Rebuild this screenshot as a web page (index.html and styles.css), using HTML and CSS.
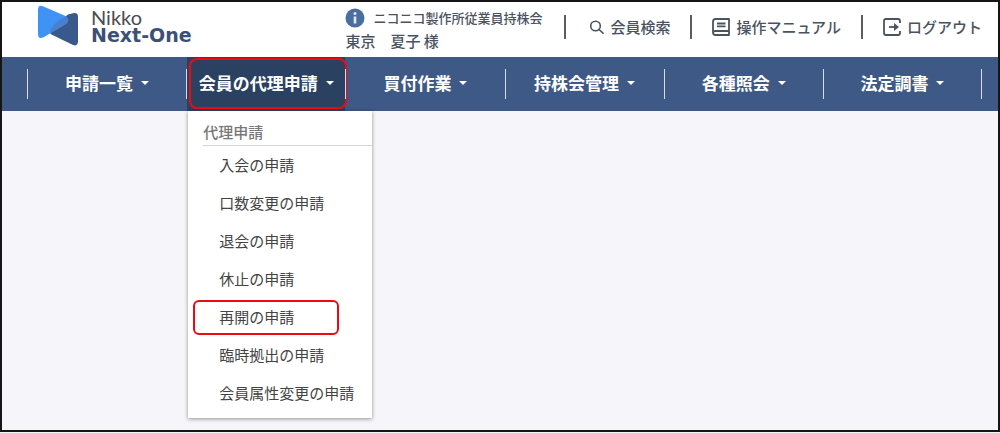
FILE: index.html
```html
<!DOCTYPE html>
<html lang="ja">
<head>
  <meta charset="UTF-8">
  <meta name="viewport" content="width=device-width, initial-scale=1.0">
  <title>Nikko Next-One</title>
  <link rel="stylesheet" href="styles.css">
</head>
<body>
<header class="header">
  <a class="logo" href="#">
    <svg class="logo-mark" viewBox="0 0 42 42" aria-hidden="true">
      <path d="M31 9.500 L37 8 Q41 7.500 41 12 V36 Q41 42 35.500 39.800 L14.500 29.500 Q11 27 14 23.500 Z" fill="#39588c"/>
      <path d="M1 5 Q1 -1 6.500 1.500 L28.500 11 Q34 14.500 29 19 L7 32 Q1 35 1 29 Z" fill="#3f93f6"/>
      <path d="M14 23.500 Q21 14 29.500 11.600 Q33.500 15 29 19 L14.500 27.500 Q12 26 14 23.500 Z" fill="#4a80cb"/>
    </svg>
    <span class="logo-text">
      <span class="logo-top">Nikko</span>
      <span class="logo-bottom">Next-One</span>
    </span>
  </a>

  <div class="user">
    <div class="user-company">
      <svg class="info-icon" viewBox="0 0 20 20" aria-hidden="true">
        <circle cx="10" cy="10" r="9.500" fill="#4a6e9e"/>
        <circle cx="10" cy="5.500" r="1.500" fill="#dfe9f7"/>
        <path d="M8.700 8.500h2.600v7H8.700z" fill="#dfe9f7"/>
      </svg>
      <span>ニコニコ製作所従業員持株会</span>
    </div>
    <div class="user-name">東京　夏子 様</div>
  </div>

  <nav class="tools">
    <a class="tool" href="#">
      <svg class="tool-icon" viewBox="0 0 18 18" fill="none" stroke="currentColor" stroke-width="1.600" stroke-linecap="round" aria-hidden="true">
        <circle cx="9.500" cy="8" r="4.800"/>
        <path d="M13 11.500l4 3.700"/>
      </svg>
      会員検索
    </a>
    <a class="tool" href="#">
      <svg class="tool-icon" viewBox="0 0 18 18" fill="none" stroke="currentColor" stroke-width="1.800" stroke-linejoin="round" aria-hidden="true">
        <path d="M17 13V1H3.500Q1 1 1 3.500V14.500Q1 17 3.500 17H17V13H3.500Q1 13 1 15"/>
        <path d="M5 5.500h8.500M5 8.300h8.500"/>
      </svg>
      操作マニュアル
    </a>
    <a class="tool" href="#">
      <svg class="tool-icon" viewBox="0 0 18 18" fill="none" stroke="currentColor" stroke-width="1.800" stroke-linejoin="round" aria-hidden="true">
        <path d="M17 5V3Q17 1 15 1H3Q1 1 1 3V15Q1 17 3 17H15Q17 17 17 15V13"/>
        <path d="M6 9h7"/>
        <path d="M11 5L16 9l-5 4z" fill="currentColor" stroke="none"/>
      </svg>
      ログアウト
    </a>
  </nav>
</header>

<nav class="menu">
  <div class="menu-item"><button class="menu-btn" type="button">申請一覧</button></div>
  <div class="menu-item active">
    <button class="menu-btn marked" type="button" aria-expanded="true">会員の代理申請</button>
    <div class="dropdown">
      <h2 class="dropdown-title">代理申請</h2>
      <ul class="dropdown-list">
        <li><a href="#">入会の申請</a></li>
        <li><a href="#">口数変更の申請</a></li>
        <li><a href="#">退会の申請</a></li>
        <li><a href="#">休止の申請</a></li>
        <li><a class="marked" href="#">再開の申請</a></li>
        <li><a href="#">臨時拠出の申請</a></li>
        <li><a href="#">会員属性変更の申請</a></li>
      </ul>
    </div>
  </div>
  <div class="menu-item"><button class="menu-btn" type="button">買付作業</button></div>
  <div class="menu-item"><button class="menu-btn" type="button">持株会管理</button></div>
  <div class="menu-item"><button class="menu-btn" type="button">各種照会</button></div>
  <div class="menu-item"><button class="menu-btn" type="button">法定調書</button></div>
</nav>
</body>
</html>
```

FILE: styles.css
```css
:root {
  --nav-color: #3e5985;
  --nav-active: #2b4161;
  --text-color: #4a5362;
  --mark-color: #ee0a10;
}

* {
  box-sizing: border-box;
  margin: 0;
  padding: 0;
}

body {
  min-height: calc(100vh - 1px);
  border: 2px solid #151515;
  background-color: #f5f5fa;
  color: var(--text-color);
  font-family: "Noto Sans CJK JP", sans-serif;
  font-size: 15px;
  line-height: 20px;
}

a {
  color: inherit;
  text-decoration: none;
}

.header {
  display: flex;
  align-items: flex-start;
  height: 55px;
  padding-left: 35px;
  background-color: #fff;
}

.logo {
  display: flex;
  gap: 12px;
  padding-top: 3px;
}

.logo-mark {
  width: 42px;
  height: 42px;
}

.logo-text {
  display: flex;
  flex-direction: column;
  padding-top: 3px;
}

.logo-top {
  font-family: Lato, sans-serif;
  font-size: 20px;
  line-height: 18px;
  color: #4c4c50;
}

.logo-bottom {
  font-family: "DejaVu Sans", sans-serif;
  font-size: 19px;
  font-weight: bold;
  line-height: 18px;
  color: #3c5078;
}

.user {
  margin-left: auto;
  padding-top: 6px;
}

.user-company {
  display: flex;
  align-items: center;
  gap: 8px;
  height: 20px;
  font-size: 13px;
  font-weight: 500;
}

.info-icon {
  width: 20px;
  height: 20px;
}

.user-name {
  padding-top: 3px;
  font-weight: 500;
}

.tools {
  display: flex;
  margin-left: 22px;
  padding-top: 13px;
}

.tool {
  display: flex;
  align-items: center;
  gap: 6px;
  height: 24px;
  padding: 0 20px;
  border-left: 2px solid #5b5d63;
  font-weight: 500;
  white-space: nowrap;
}

.tool:last-child {
  padding-right: 16px;
}

.tool-icon {
  width: 18px;
  height: 18px;
}

.menu {
  display: flex;
  height: 54px;
  padding: 0 16px 0 25px;
  background-color: var(--nav-color);
}

.menu-item {
  position: relative;
  flex: 1;
  display: flex;
  align-items: center;
}

/* thin separators between the menu items */
.menu-item::before,
.menu-item:last-child::after {
  content: "";
  width: 1px;
  height: 30px;
  background-color: #d5deea;
}

.menu-btn {
  position: relative;
  flex: 1;
  display: flex;
  align-items: center;
  justify-content: center;
  gap: 8px;
  height: 100%;
  padding-bottom: 2px;
  border: none;
  background: none;
  color: #fff;
  font: inherit;
  font-size: 17px;
  font-weight: bold;
  white-space: nowrap;
  cursor: pointer;
}

.menu-btn::after {
  content: "";
  border: 4px solid transparent;
  border-top-color: #fff;
  border-bottom: none;
}

.active .menu-btn {
  background-color: var(--nav-active);
}

.marked::before {
  content: "";
  position: absolute;
  border: 2px solid var(--mark-color);
}

.menu-btn.marked::before {
  inset: 1px -2px 2px 2px;
  border-radius: 8px;
}

.dropdown {
  position: absolute;
  top: 100%;
  left: 2px;
  width: 184px;
  padding-bottom: 6px;
  background-color: #fff;
  box-shadow: 0 1px 4px rgba(0, 0, 0, 0.4);
}

.dropdown-title {
  margin-left: 15px;
  padding-top: 11px;
  padding-bottom: 3px;
  border-bottom: 1px solid #d4d4d4;
  font-size: 15px;
  font-weight: 500;
  color: #777;
}

.dropdown-list {
  list-style: none;
}

.dropdown-list a {
  position: relative;
  display: block;
  padding-left: 31px;
  line-height: 38px;
  color: #444;
}

.dropdown-list .marked::before {
  inset: 2px 33px 1px 5px;
  border-radius: 6px;
}

.menu-btn:hover,
.dropdown-list a:hover {
  text-decoration: underline;
}
```
